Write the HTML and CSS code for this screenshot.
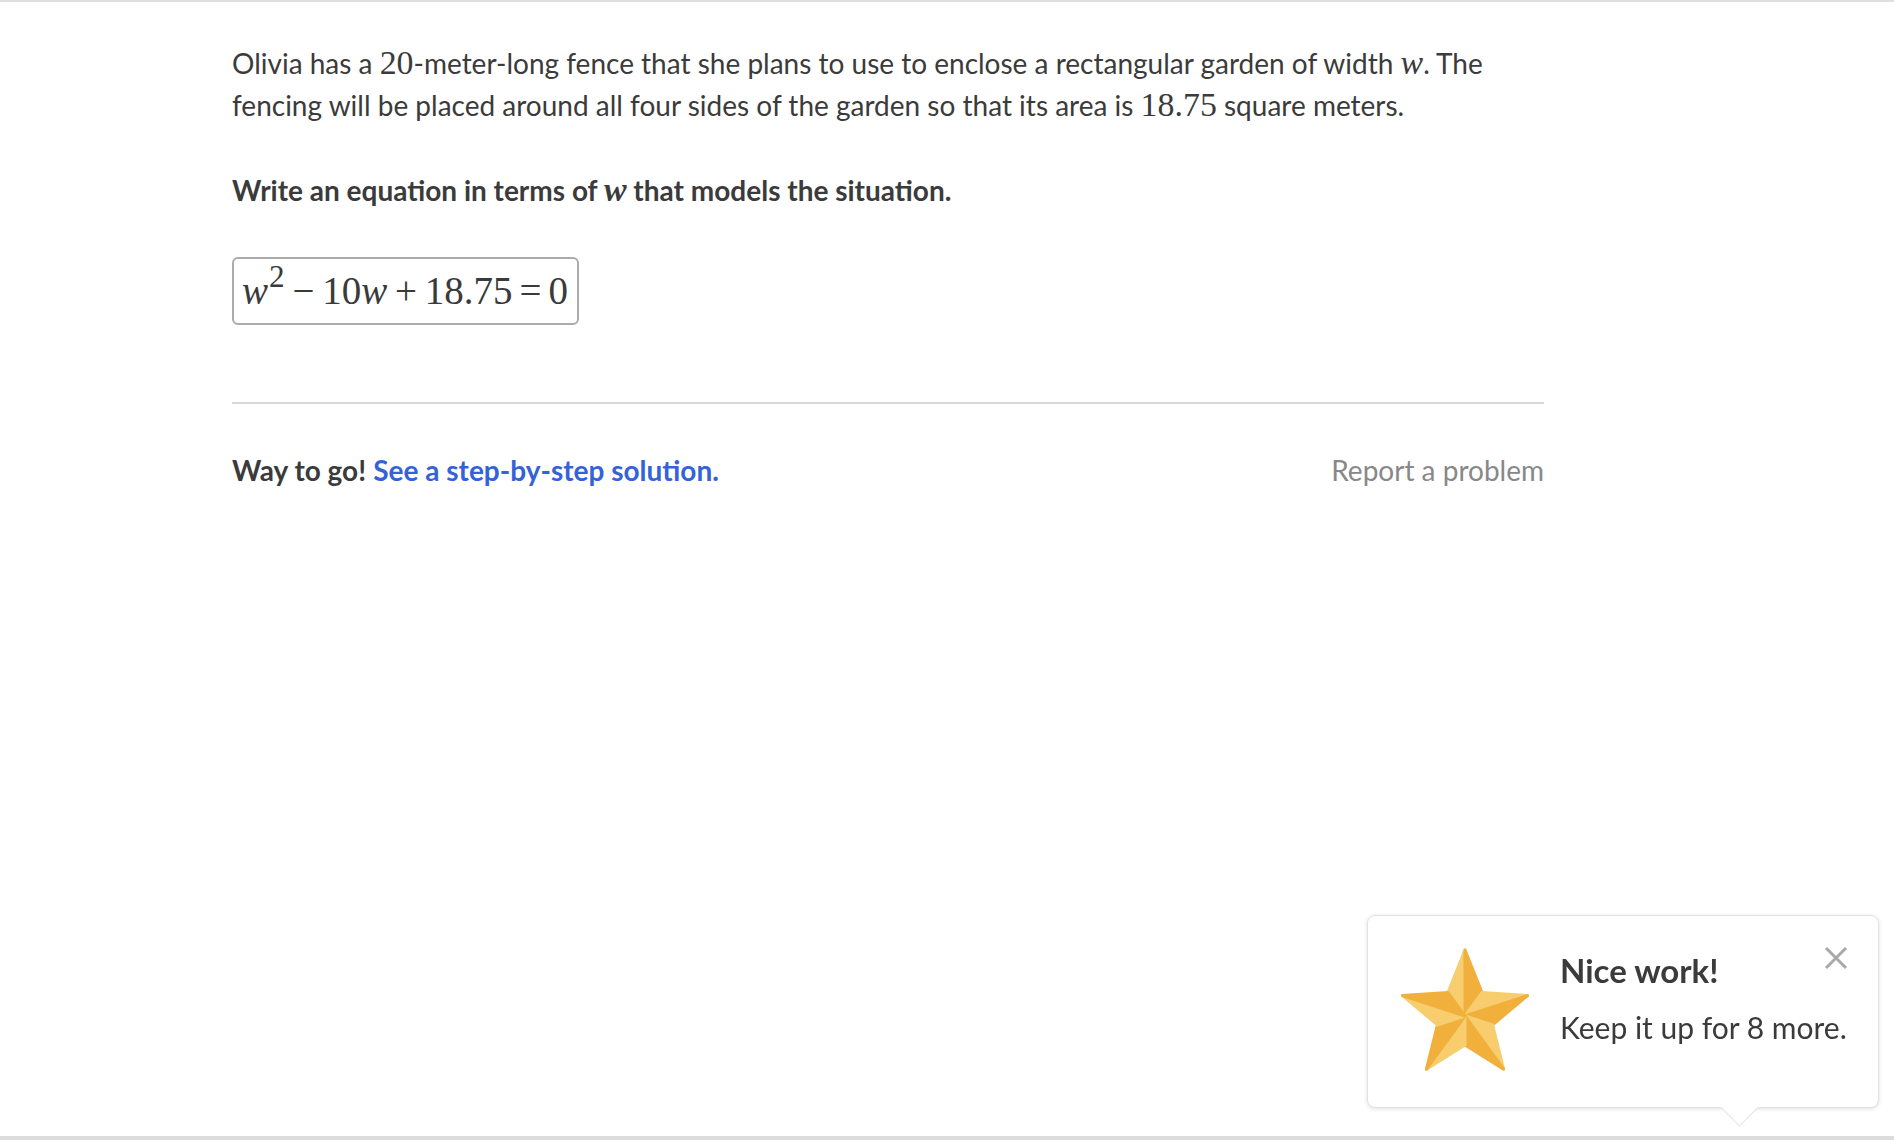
FILE: index.html
```html
<!DOCTYPE html>
<html lang="en">
<head>
<meta charset="utf-8">
<title>Exercise</title>
<link rel="stylesheet" href="styles.css">
</head>
<body>
<main class="page">
  <div class="content">
    <p class="prompt">Olivia has a <span class="m">20</span>-meter-long fence that she plans to use to enclose a rectangular garden of width <span class="m mi">w</span>. The <span class="run">fencing will be placed around all four sides of the garden so that its area is</span> <span class="m">18.75</span> square meters.</p>
    <p class="question">Write an equation in terms of <span class="m mi">w</span> that models the situation.</p>
    <div class="answer">
      <div class="mq"><span class="var">w</span><span class="sup">2</span><span class="bin">−</span><span>10</span><span class="var">w</span><span class="bin">+</span><span>18.75</span><span class="rel">=</span><span>0</span></div>
    </div>
    <div class="divider"></div>
    <div class="footer">
      <div class="status"><strong>Way to go!</strong> <a class="solution" href="#">See a step-by-step solution.</a></div>
      <a class="report" href="#">Report a problem</a>
    </div>
  </div>
</main>

<div class="toast">
  <svg class="star" width="128" height="128" viewBox="0 0 128 128" aria-hidden="true">
    <g stroke-width="3" stroke-linejoin="round">
      <polygon class="lt" points="64,3 64,69 46.95,45.54"/>
      <polygon class="dk" points="64,3 64,69 81.05,45.54"/>
      <polygon class="lt" points="126.5,48.6 64,69 81.05,45.54"/>
      <polygon class="dk" points="126.5,48.6 64,69 91.58,77.96"/>
      <polygon class="lt" points="102.6,122.2 64,69 91.58,77.96"/>
      <polygon class="dk" points="102.6,122.2 64,69 64,98"/>
      <polygon class="lt" points="25.4,122.2 64,69 64,98"/>
      <polygon class="dk" points="25.4,122.2 64,69 36.42,77.96"/>
      <polygon class="lt" points="1.5,48.6 64,69 36.42,77.96"/>
      <polygon class="dk" points="1.5,48.6 64,69 46.95,45.54"/>
    </g>
  </svg>
  <div class="toast-text">
    <div class="toast-title">Nice work!</div>
    <div class="toast-body">Keep it up for 8 more.</div>
  </div>
  <button class="close" aria-label="Close">
    <svg width="24" height="24" viewBox="0 0 24 24"><path d="M2 2 L22 22 M22 2 L2 22" stroke="#a9a9a9" stroke-width="3" fill="none"/></svg>
  </button>
  <span class="arrow"></span>
</div>

<div class="bottom-bar"></div>
</body>
</html>
```

FILE: styles.css
```css
* {
  box-sizing: border-box;
}

html, body {
  margin: 0;
  padding: 0;
  background: #ffffff;
}

body {
  font-family: Lato, "Noto Sans", "Liberation Sans", sans-serif;
  color: #3b3b3b;
  border-top: 2px solid #dedede;
  min-height: 100vh;
}

.page {
  padding-left: 232px;
}

.content {
  width: 1312px;
}

.prompt {
  margin: 40px 0 0;
  font-size: 28px;
  line-height: 42px;
}

.m {
  font-family: "Liberation Serif", "Times New Roman", serif;
  font-size: 1.21em;
  line-height: 1;
}

.mi {
  font-style: italic;
}

.question {
  margin: 43px 0 0;
  font-size: 28px;
  line-height: 42px;
  font-weight: 700;
}

.answer {
  margin-top: 46px;
  display: flex;
}

.mq {
  display: flex;
  align-items: baseline;
  height: 68px;
  padding: 0 9px 0 8px;
  border: 2px solid #ababab;
  border-radius: 6px;
  font-family: "Liberation Serif", "Times New Roman", serif;
  font-size: 39px;
  line-height: 64px;
  color: #3a3a3a;
  white-space: nowrap;
}

.var {
  font-style: italic;
}

.sup {
  font-size: 0.8em;
  position: relative;
  top: -0.55em;
  margin-left: 1px;
}

.bin {
  padding: 0 0.2em;
}

.rel {
  padding: 0 0.18em;
}

.divider {
  margin-top: 77px;
  height: 2px;
  background: #d9d9d9;
}

.footer {
  margin-top: 45px;
  display: flex;
  justify-content: space-between;
  font-size: 28px;
  line-height: 42px;
}

.status strong {
  font-weight: 700;
  color: #3b3b3b;
}

.solution {
  font-weight: 700;
  color: #3462d8;
  text-decoration: none;
}

.report {
  color: #888888;
  text-decoration: none;
}

.toast {
  position: fixed;
  right: 15px;
  bottom: 32px;
  width: 512px;
  height: 193px;
  background: #ffffff;
  border: 1px solid #e2e2e2;
  border-radius: 8px;
  box-shadow: 0 1px 4px rgba(0, 0, 0, 0.12);
  display: flex;
  align-items: flex-start;
  padding: 31px 0 0 33px;
}

.star {
  flex: none;
}

.star .lt {
  fill: #f8cd6e;
  stroke: #f8cd6e;
}

.star .dk {
  fill: #f1b03c;
  stroke: #f1b03c;
}

.toast-text {
  margin-left: 31px;
  padding-top: 3px;
}

.toast-title {
  font-size: 33px;
  line-height: 40px;
  font-weight: 700;
  color: #3b3b3b;
}

.toast-body {
  margin-top: 16px;
  font-size: 30px;
  line-height: 42px;
  color: #3b3b3b;
}

.close {
  position: absolute;
  top: 30px;
  right: 30px;
  width: 24px;
  height: 24px;
  padding: 0;
  border: 0;
  background: none;
}

.close svg {
  display: block;
}

.arrow {
  position: absolute;
  left: 358px;
  bottom: -14px;
  width: 27px;
  height: 27px;
  background: #ffffff;
  border-right: 1px solid #e2e2e2;
  border-bottom: 1px solid #e2e2e2;
  transform: rotate(45deg);
}

.bottom-bar {
  position: fixed;
  left: 0;
  right: 0;
  bottom: 0;
  height: 4px;
  background: #dcdcdc;
}
```
